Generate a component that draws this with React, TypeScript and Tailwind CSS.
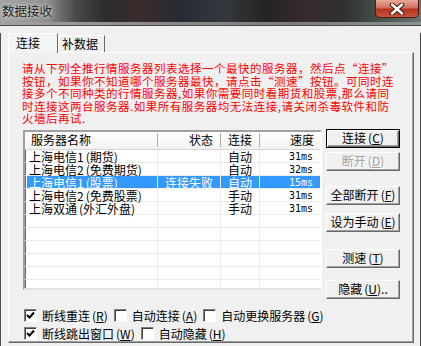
import React from "react";

const rows = [
  { name: "上海电信1", tag: "期货", status: "", mode: "自动", speed: "31ms" },
  { name: "上海电信2", tag: "免费期货", status: "", mode: "自动", speed: "32ms" },
  { name: "上海电信1", tag: "股票", status: "连接失败", mode: "自动", speed: "15ms", sel: true },
  { name: "上海电信2", tag: "免费股票", status: "", mode: "手动", speed: "31ms" },
  { name: "上海双通", tag: "外汇外盘", status: "", mode: "手动", speed: "31ms" },
];

const notice = [
  "请从下列全推行情服务器列表选择一个最快的服务器，然后点“连接”",
  "按钮，如果你不知道哪个服务器最快，请点击“测速”按钮。可同时连",
  "接多个不同种类的行情服务器,如果你需要同时看期货和股票,那么请同",
  "时连接这两台服务器.如果所有服务器均无法连接,请关闭杀毒软件和防",
  "火墙后再试.",
];

function Hot({ k }: { k: string }) {
  return (
    <span className="pl-[2px]">
      (<span className="underline">{k}</span>)
    </span>
  );
}

function Button({
  label,
  k,
  tail,
  primary,
  disabled,
  className,
}: {
  label: string;
  k: string;
  tail?: string;
  primary?: boolean;
  disabled?: boolean;
  className?: string;
}) {
  return (
    <div
      className={
        "flex h-[19px] w-[74px] items-center justify-center bg-[#f0f0f0] leading-none " +
        (primary
          ? "border border-black shadow-[inset_1px_1px_0_#fff,inset_-1px_-1px_0_#696969,inset_-2px_-2px_0_#a0a0a0] "
          : "border border-t-white border-l-white border-r-[#696969] border-b-[#696969] shadow-[inset_-1px_-1px_0_#a0a0a0] ") +
        (disabled ? "text-[#a0a0a0] [text-shadow:1px_1px_0_#fff] " : "text-black ") +
        (className ?? "")
      }
    >
      {label}
      <Hot k={k} />
      {tail}
    </div>
  );
}

function Check({ checked }: { checked?: boolean }) {
  return (
    <div className="flex h-[13px] w-[13px] shrink-0 items-center justify-center border border-t-[#808080] border-l-[#808080] border-r-white border-b-white bg-white shadow-[inset_1px_1px_0_#404040]">
      {checked && (
        <svg width="9" height="9" viewBox="0 0 9 9">
          <path d="M1 4 L3.5 6.5 L8 1.5" stroke="#000" strokeWidth="2" fill="none" />
        </svg>
      )}
    </div>
  );
}

function Option({ label, k, checked }: { label: string; k: string; checked?: boolean }) {
  return (
    <div className="flex items-center gap-[5px]">
      <Check checked={checked} />
      <span className="leading-[13px]">
        {label}
        <Hot k={k} />
      </span>
    </div>
  );
}

export default function App() {
  return (
    <div className="h-[346px] w-[421px] overflow-hidden bg-[#f0f0f0] font-['Noto_Sans_CJK_SC',sans-serif] text-[12px] text-black">
      {/* title bar */}
      <div className="relative h-[22px] bg-[linear-gradient(90deg,#a3a3a3_0%,#8f8f8f_11%,#4a4a4a_18%,#2b2b2b_25%,#3b2b2c_33%,#262a33_43%,#34383d_53%,#242424_63%,#382a2c_72%,#2e3230_82%,#4d5a52_92%,#6b746e_100%)]">
        <div className="absolute left-[2px] top-[3px] text-[12.5px] leading-[16px] text-[#1e1e1e] [text-shadow:0_0_6px_#d8d8d8,0_0_3px_#d8d8d8]">
          数据接收
        </div>
        <div className="absolute right-[2px] top-0 flex h-[18px] w-[44px] items-center justify-center rounded-b-[5px] border border-t-0 border-[#4a1c16] bg-[linear-gradient(180deg,#e8a89a_0%,#d0705e_45%,#b8321e_55%,#c8563e_100%)]">
          <svg width="16" height="12" viewBox="0 0 16 12">
            <path d="M3 1.5 L13 10.5 M13 1.5 L3 10.5" stroke="#3a1510" strokeWidth="4.5" strokeLinecap="round" />
            <path d="M3 1.5 L13 10.5 M13 1.5 L3 10.5" stroke="#fff" strokeWidth="2.5" strokeLinecap="round" />
          </svg>
        </div>
      </div>
      <div className="h-[3px] bg-[linear-gradient(90deg,#a0a0a0,#8a8a8a_40%,#7c7c7c_70%,#8a948e)]" />
      <div className="h-px bg-[#4a4a4a]" />

      {/* client area */}
      <div className="h-[320px] border-l border-r border-[#4a4a4a]">
        {/* tabs */}
        <div className="ml-[7px] mt-[7px] flex h-[19px] items-end">
          <div className="relative z-10 -mb-px flex h-[20px] w-[50px] items-start border border-b-0 border-t-white border-l-white border-r-[#696969] bg-[#f4f4f4] pl-[7px] pt-[2px] leading-[14px]">
            连接
          </div>
          <div className="flex h-[17px] w-[47px] items-start border border-b-0 border-t-white border-l-white border-r-[#696969] pl-[3px] pt-[1px] leading-[14px]">
            补数据
          </div>
        </div>

        {/* tab panel */}
        <div className="ml-[7px] flex h-[291px] w-[406px] flex-col border border-t-white border-l-white border-r-[#696969] border-b-[#696969] pl-[14px] pt-[9px] shadow-[inset_-1px_-1px_0_#a0a0a0]">
          <div className="-ml-px whitespace-nowrap text-[11.5px] leading-[12.5px] tracking-[0.5px] text-[#f00]">
            {notice.map((l) => (
              <div key={l}>{l}</div>
            ))}
          </div>

          <div className="mt-[5px] flex items-start gap-[4px]">
            {/* server list */}
            <div className="h-[160px] w-[299px] overflow-hidden border-2 border-t-[#a0a0a0] border-l-[#a0a0a0] border-r-white border-b-[#e3e3e3] bg-white shadow-[inset_1px_1px_0_#696969]">
              <div className="flex h-[18px] items-center border-b border-[#d5d5d5] bg-[linear-gradient(180deg,#fff,#f2f2f2)] leading-[14px]">
                <div className="w-[133px] border-r border-[#b0b0b0] pl-[6px]">服务器名称</div>
                <div className="w-[63px] border-r border-[#b0b0b0] pr-[7px] text-right">状态</div>
                <div className="w-[39px] border-r border-[#b0b0b0] text-center">连接</div>
                <div className="w-[60px] pr-[6px] text-right">速度</div>
              </div>
              {rows.map((r) => (
                <div key={r.name + r.tag} className="flex h-[13px] border-b border-[#ececec] pl-[2px] leading-[13px]">
                  <div className={"flex flex-1 " + (r.sel ? "bg-[#3399ff] text-white" : "")}>
                    <div className="w-[131px] whitespace-nowrap border-r border-[#ececec] pl-[2px]">
                      {r.name}
                      <span className="pl-[2px]">({r.tag})</span>
                    </div>
                    <div className="w-[63px] border-r border-[#ececec] pr-[7px] text-right">{r.status}</div>
                    <div className="w-[39px] border-r border-[#ececec] text-center">{r.mode}</div>
                    <div className="w-[60px] pr-[7px] text-right font-['DejaVu_Sans_Mono',monospace] text-[10px]">
                      {r.speed}
                    </div>
                  </div>
                </div>
              ))}
              {Array.from({ length: 6 }).map((_, i) => (
                <div key={i} className="flex h-[13px] border-b border-[#ececec] pl-[2px]">
                  <div className="w-[131px] border-r border-[#ececec]" />
                  <div className="w-[63px] border-r border-[#ececec]" />
                  <div className="w-[39px] border-r border-[#ececec]" />
                </div>
              ))}
            </div>

            {/* buttons */}
            <div className="-mt-px flex flex-col">
              <Button label="连接" k="C" primary />
              <Button label="断开" k="D" disabled className="mt-[4px]" />
              <Button label="全部断开" k="F" className="mt-[15px]" />
              <Button label="设为手动" k="E" className="mt-[8px]" />
              <Button label="测速" k="T" className="mt-[17px]" />
              <Button label="隐藏" k="U" tail=".." className="mt-[12px]" />
            </div>
          </div>

          {/* options */}
          <div className="mt-[10px] flex flex-col gap-[5px] pl-[1px]">
            <div className="flex items-center gap-[6px]">
              <Option label="断线重连" k="R" checked />
              <Option label="自动连接" k="A" />
              <Option label="自动更换服务器" k="G" />
            </div>
            <div className="flex items-center gap-[6px]">
              <Option label="断线跳出窗口" k="W" checked />
              <Option label="自动隐藏" k="H" />
            </div>
          </div>
        </div>
      </div>
    </div>
  );
}
